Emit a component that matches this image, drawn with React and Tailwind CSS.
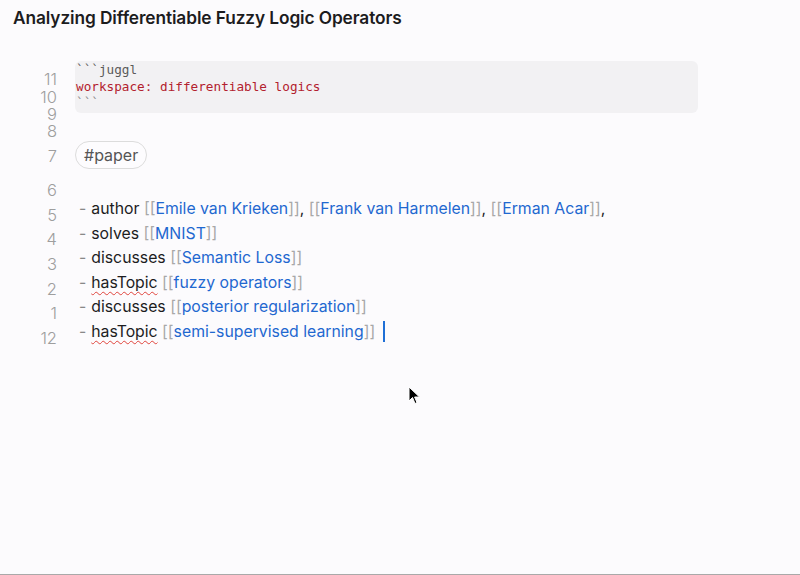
import React from "react";

const gutter = [
  { n: "11", mt: "mt-[10px]" },
  { n: "10", mt: "mt-[2px]" },
  { n: "9", mt: "mt-[1px]" },
  { n: "8", mt: "mt-[1px]" },
  { n: "7", mt: "mt-[9px]" },
  { n: "6", mt: "mt-[18px]" },
  { n: "5", mt: "mt-[9px]" },
  { n: "4", mt: "mt-[8px]" },
  { n: "3", mt: "mt-[9px]" },
  { n: "2", mt: "mt-[9px]" },
  { n: "1", mt: "mt-[8px]" },
  { n: "12", mt: "mt-[9px]" },
];

function Link({ children }) {
  return (
    <>
      <span className="text-[#a8a8a8]">[[</span>
      <span className="text-[#1f68d0]">{children}</span>
      <span className="text-[#a8a8a8]">]]</span>
    </>
  );
}

function Typo({ children }) {
  return (
    <span className="underline decoration-wavy decoration-[#e0443c] decoration-1 underline-offset-[3px]">
      {children}
    </span>
  );
}

function Item({ children }) {
  return (
    <div className="h-[24.6px] leading-[24.6px] whitespace-nowrap">
      <span className="text-[#888] mr-[5px] ml-[4px]">-</span>
      {children}
    </div>
  );
}

export default function App() {
  return (
    <div className="relative h-[575px] bg-[#fcfbfd] border-b border-[#a9a9a9] overflow-hidden font-['Inter',sans-serif] text-[#1d1d1f]">
      <h1 className="pl-[13px] pt-[6px] text-[17.3px] leading-[24px] font-semibold text-[#1c1c1e] tracking-[-0.1px]">
        Analyzing Differentiable Fuzzy Logic Operators
      </h1>

      <div className="flex mt-[31px]">
        <div className="w-[57px] flex flex-col items-end text-[16.5px] leading-[16px] text-[#9e9e9e] font-light">
          {gutter.map((g, i) => (
            <div key={i} className={`h-[16px] ${g.mt}`}>
              {g.n}
            </div>
          ))}
        </div>

        <div className="ml-[18px] flex-1">
          <div className="w-[623px] h-[52px] bg-[#f2f1f3] rounded-[6px] pl-[1px] pt-[1px] font-['DejaVu_Sans_Mono',monospace] text-[12.7px] leading-[16.5px]">
            <div className="text-[#5a5a5a]">```juggl</div>
            <div className="text-[#b3212e]">workspace: differentiable logics</div>
            <div className="text-[#8a8a8a]">```</div>
          </div>

          <div className="mt-[28px] inline-flex items-center h-[28px] px-[8px] rounded-full border border-[#dcdcdc] text-[16px] text-[#555] bg-[#fdfcfe]">
            #paper
          </div>

          <div className="mt-[28px] text-[15.8px]">
            <Item>
              author <Link>Emile van Krieken</Link>, <Link>Frank van Harmelen</Link>,{" "}
              <Link>Erman Acar</Link>,
            </Item>
            <Item>
              solves <Link>MNIST</Link>
            </Item>
            <Item>
              discusses <Link>Semantic Loss</Link>
            </Item>
            <Item>
              <Typo>hasTopic</Typo> <Link>fuzzy operators</Link>
            </Item>
            <Item>
              discusses <Link>posterior regularization</Link>
            </Item>
            <Item>
              <Typo>hasTopic</Typo> <Link>semi-supervised learning</Link>
              <span className="inline-block align-middle ml-[8px] w-[2px] h-[21px] bg-[#1f6fd6] -mt-[3px]" />
            </Item>
          </div>
        </div>
      </div>

      <svg
        className="absolute left-[408px] top-[386px]"
        width="13"
        height="19"
        viewBox="0 0 13 19"
      >
        <path
          d="M1 1 L1 15 L4.5 11.5 L7 17.5 L9 16.6 L6.6 11 L11.5 11 Z"
          fill="#000"
          stroke="#fff"
          strokeWidth="1"
          strokeLinejoin="round"
        />
      </svg>
    </div>
  );
}
